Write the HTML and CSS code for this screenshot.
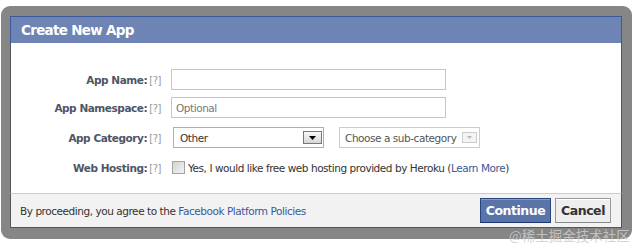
FILE: index.html
```html
<!DOCTYPE html>
<html lang="en">
<head>
  <meta charset="UTF-8">
  <meta name="viewport" content="width=device-width, initial-scale=1.0">
  <title>Create New App</title>
  <link rel="stylesheet" href="styles.css">
</head>
<body>
  <div class="frame">
    <div class="dialog">
      <h2 class="dialog-title">Create New App</h2>

      <!-- App details -->
      <form class="dialog-body">
        <div class="row">
          <label class="field-label" for="appName">App Name:<span class="help">[?]</span></label>
          <input type="text" id="appName" class="text-input">
        </div>
        <div class="row row-wide">
          <label class="field-label" for="appNamespace">App Namespace:<span class="help">[?]</span></label>
          <input type="text" id="appNamespace" class="text-input" placeholder="Optional">
        </div>
        <div class="row row-wide">
          <label class="field-label">App Category:<span class="help">[?]</span></label>
          <div class="select select-main">
            <span class="select-text">Other</span>
            <span class="select-arrow">
              <svg width="7" height="4" viewBox="0 0 7 4"><path d="M0 0h7L3.5 4z" fill="#000"/></svg>
            </span>
          </div>
          <div class="select select-sub">
            <span class="select-text">Choose a sub-category</span>
            <span class="select-arrow">
              <svg width="5" height="3" viewBox="0 0 5 3"><path d="M0 0h5L2.5 3z" fill="#b8b8b8"/></svg>
            </span>
          </div>
        </div>
        <div class="row">
          <label class="field-label">Web Hosting:<span class="help">[?]</span></label>
          <span class="checkbox"></span>
          <span class="hosting-text">Yes, I would like free web hosting provided by Heroku (<a href="#">Learn More</a>)</span>
        </div>
      </form>

      <!-- Footer -->
      <div class="dialog-footer">
        <span>By proceeding, you agree to the <a href="#">Facebook Platform Policies</a></span>
        <div class="buttons">
          <button type="button" class="btn btn-primary">Continue</button>
          <button type="button" class="btn btn-cancel">Cancel</button>
        </div>
      </div>
    </div>
  </div>

  <div class="watermark">@稀土掘金技术社区</div>
</body>
</html>
```

FILE: styles.css
```css
body {
  margin: 0;
  font-family: 'DejaVu Sans', Tahoma, sans-serif;
  font-size: 10.5px;
  letter-spacing: -0.45px;
  color: #333;
  background: #fff;
}
a {
  color: #3b5998;
  text-decoration: none;
}
.frame {
  width: 631px;
  height: 233px;
  box-sizing: border-box;
  margin: 6px 0 0 1px;
  padding: 10px 10px 11px 9px;
  background: #868686;
  border-radius: 9px;
}
.dialog {
  display: flex;
  flex-direction: column;
  height: 100%;
}
.dialog-title {
  margin: 0;
  height: 27px;
  box-sizing: border-box;
  padding-left: 10px;
  border: 1px solid #3b5998;
  border-bottom: none;
  background: #6d84b4;
  color: #fff;
  font-size: 13.5px;
  font-weight: bold;
  letter-spacing: -0.7px;
  line-height: 26px;
}
.dialog-body {
  flex: 1;
  margin: 0;
  padding: 26px 0 8px;
  background: #fff;
  border-left: 1px solid #555;
  border-right: 1px solid #555;
}
.row {
  display: flex;
  align-items: center;
  height: 21px;
  margin-bottom: 7px;
}
.row-wide {
  margin-bottom: 9px;
}
.field-label {
  width: 150px;
  margin-right: 10px;
  text-align: right;
  font-weight: bold;
  color: #4e5665;
}
.help {
  margin-left: 2px;
  font-size: 10px;
  font-weight: normal;
  color: #999;
}
.text-input {
  width: 275px;
  height: 21px;
  box-sizing: border-box;
  margin: 0;
  padding: 0 4px;
  border: 1px solid #bdc7d8;
  font: inherit;
  letter-spacing: inherit;
  color: #333;
}
.text-input::placeholder {
  color: #777;
}
.select {
  display: flex;
  align-items: center;
  justify-content: space-between;
  height: 21px;
  box-sizing: border-box;
  border: 1px solid #a9afb8;
}
.select-main {
  width: 151px;
  margin-left: 2px;
  padding: 0 1px 0 6px;
}
.select-sub {
  width: 141px;
  margin-left: 15px;
  padding: 0 2px 0 5px;
  border-color: #ccc;
  color: #555;
}
.select-arrow {
  display: flex;
  align-items: center;
  justify-content: center;
  width: 19px;
  height: 13px;
  box-sizing: border-box;
  border: 1px solid #777;
  background: linear-gradient(#fafafa, #d6d6d6);
}
.select-sub .select-arrow {
  width: 15px;
  height: 11px;
  border-color: #ccc;
  background: #f4f4f4;
}
.checkbox {
  width: 13px;
  height: 13px;
  box-sizing: border-box;
  margin: 0 3px 0 1px;
  border: 1px solid #a3a3a3;
  background: linear-gradient(135deg, #d4d4d4, #f2f2f2);
}
.dialog-footer {
  display: flex;
  align-items: center;
  justify-content: space-between;
  height: 42px;
  box-sizing: border-box;
  padding: 0 10px 0 9px;
  border: 1px solid #555;
  border-top-color: #ccc;
  background: #f2f2f2;
}
.buttons {
  display: flex;
  gap: 4px;
}
.btn {
  height: 25px;
  box-sizing: border-box;
  margin: 0;
  padding: 0;
  border: 1px solid;
  font-family: inherit;
  font-size: 12.5px;
  font-weight: bold;
  letter-spacing: -0.45px;
}
.btn-primary {
  width: 71px;
  background: #5b74a8;
  border-color: #29447e #29447e #1a356e;
  color: #fff;
  box-shadow: inset 0 1px 0 #8a9cc2;
}
.btn-cancel {
  width: 56px;
  background: #eee;
  border-color: #999 #999 #888;
  color: #333;
  box-shadow: inset 0 1px 0 #fff;
}
.watermark {
  position: absolute;
  left: 509px;
  top: 227px;
  font-family: 'Noto Sans CJK SC', sans-serif;
  font-size: 13.5px;
  letter-spacing: 0;
  line-height: 16px;
  color: rgba(205, 205, 205, 0.85);
}
```
